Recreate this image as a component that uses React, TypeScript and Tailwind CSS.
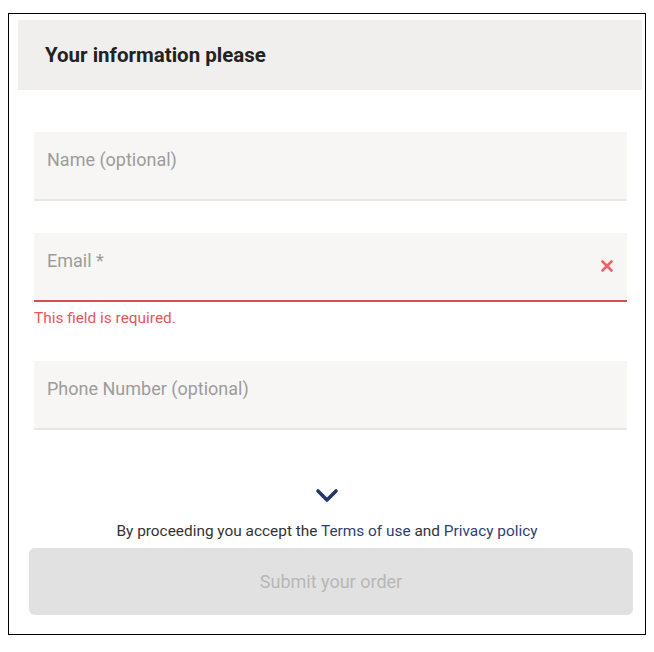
import React from 'react';

function Field({ label, error }: { label: string; error?: boolean }) {
  return (
    <div className="ml-[25px] w-[593px]">
      <div className="relative h-[67px] bg-[#f7f6f5]">
        <span className="absolute left-[13px] top-[14px] text-[18px] text-[#9c9c9c]">{label}</span>
        {error && (
          <svg
            className="absolute right-[14px] top-[27px]"
            width="12"
            height="12"
            viewBox="0 0 12 12"
            fill="none"
            stroke="#f0626a"
            strokeWidth="2.6"
            strokeLinecap="round"
          >
            <path d="M1.5 1.5l9 9M10.5 1.5l-9 9" />
          </svg>
        )}
      </div>
      {error ? <div className="h-[2px] bg-[#dc4a52]" /> : <div className="h-[2px] bg-[#e8e7e6]" />}
    </div>
  );
}

export default function App() {
  return (
    <div className="bg-white min-h-screen pt-[13px] pl-[8px]" style={{ fontFamily: 'Roboto, "Liberation Sans", sans-serif' }}>
      <div className="w-[638px] h-[622px] border border-black">
        <div className="ml-[9px] mt-[6px] w-[624px] h-[70px] bg-[#f0efee] flex items-center pl-[27px]">
          <h1 className="text-[20.5px] font-bold text-[#222]">Your information please</h1>
        </div>

        <div className="mt-[42px]">
          <Field label="Name (optional)" />
        </div>
        <div className="mt-[32px]">
          <Field label="Email *" error />
          <p className="ml-[25px] mt-[7px] text-[15.4px] text-[#e5555d] leading-[18px]">This field is required.</p>
        </div>
        <div className="mt-[34px]">
          <Field label="Phone Number (optional)" />
        </div>

        <div className="flex justify-center mt-[58px]">
          <svg width="24" height="15" viewBox="0 0 24 15" fill="none" stroke="#24376b" strokeWidth="3.6" strokeLinecap="round" strokeLinejoin="round">
            <path d="M3 3l9 9 9-9" />
          </svg>
        </div>
        <p className="text-center text-[15.4px] text-[#333] mt-[18px] leading-[20px]">
          By proceeding you accept the <a className="text-[#2e3f72] cursor-pointer">Terms of use</a> and{' '}
          <a className="text-[#2e3f72] cursor-pointer">Privacy policy</a>
        </p>
        <div className="ml-[20px] mt-[7px] w-[604px] h-[67px] rounded-[6px] bg-[#e1e1e1] flex items-center justify-center">
          <span className="text-[18px] text-[#b7b7b7]">Submit your order</span>
        </div>
      </div>
    </div>
  );
}
